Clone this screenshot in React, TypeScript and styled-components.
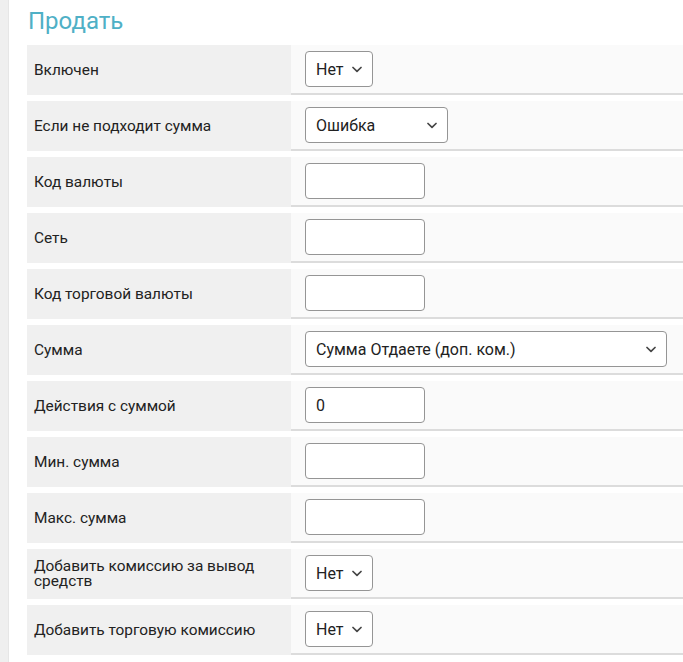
import React from "react";
import styled, { createGlobalStyle } from "styled-components";

const Global = createGlobalStyle`
  html, body { margin: 0; padding: 0; background: #ffffff; }
  body { font-family: Roboto, "Noto Sans", "Liberation Sans", sans-serif; color: #222; }
`;

const Page = styled.div`
  display: flex;
  min-height: 662px;
`;

const SideStrip = styled.div`
  width: 8px;
  flex: 0 0 8px;
  background: #efefef;
  border-right: 1px solid #e6e6e6;
`;

const Main = styled.main`
  flex: 1;
  padding: 6px 0 0 18px;
  min-width: 0;
`;

const Title = styled.h2`
  margin: 0 0 9px 1px;
  font-size: 24px;
  font-weight: 400;
  line-height: 30px;
  color: #4fb0c6;
`;

const Rows = styled.div`
  display: flex;
  flex-direction: column;
  gap: 6px;
`;

const Row = styled.div`
  display: grid;
  grid-template-columns: 264px 1fr;
  height: 50px;
`;

const Label = styled.div`
  background: #f0f0f0;
  display: flex;
  align-items: center;
  padding: 0 30px 0 7px;
  font-size: 15.4px;
  line-height: 15px;
  color: #222;
`;

const Value = styled.div`
  background: #fafafa;
  border-bottom: 2px solid #dcdcdc;
  display: flex;
  align-items: center;
  padding: 0 14px;
`;

const TextInput = styled.div`
  box-sizing: border-box;
  width: 120px;
  height: 36px;
  border: 1px solid #959595;
  border-radius: 4px;
  background: #fff;
  display: flex;
  align-items: center;
  padding: 0 10px;
  font-size: 16px;
  color: #222;
`;

const Select = styled.div<{ $w: number }>`
  box-sizing: border-box;
  width: ${(p) => p.$w}px;
  height: 36px;
  border: 1px solid #959595;
  border-radius: 4px;
  background: #fff;
  display: flex;
  align-items: center;
  justify-content: space-between;
  padding: 0 10px 0 10px;
  font-size: 16px;
  color: #222;
`;

const Chevron = () => (
  <svg width="10" height="7" viewBox="0 0 10 7" aria-hidden="true">
    <path d="M1 1.5 L5 5.3 L9 1.5" fill="none" stroke="#444" strokeWidth="1.7" strokeLinecap="round" strokeLinejoin="round" />
  </svg>
);

type Field =
  | { label: string; kind: "input"; value?: string }
  | { label: string; kind: "select"; value: string; width: number };

const fields: Field[] = [
  { label: "Включен", kind: "select", value: "Нет", width: 68 },
  { label: "Если не подходит сумма", kind: "select", value: "Ошибка", width: 143 },
  { label: "Код валюты", kind: "input" },
  { label: "Сеть", kind: "input" },
  { label: "Код торговой валюты", kind: "input" },
  { label: "Сумма", kind: "select", value: "Сумма Отдаете (доп. ком.)", width: 362 },
  { label: "Действия с суммой", kind: "input", value: "0" },
  { label: "Мин. сумма", kind: "input" },
  { label: "Макс. сумма", kind: "input" },
  { label: "Добавить комиссию за вывод средств", kind: "select", value: "Нет", width: 68 },
  { label: "Добавить торговую комиссию", kind: "select", value: "Нет", width: 68 },
];

export default function App() {
  return (
    <>
      <Global />
      <Page>
        <SideStrip />
        <Main>
          <Title>Продать</Title>
          <Rows>
            {fields.map((f) => (
              <Row key={f.label}>
                <Label>{f.label}</Label>
                <Value>
                  {f.kind === "input" ? (
                    <TextInput>{f.value ?? ""}</TextInput>
                  ) : (
                    <Select $w={f.width}>
                      <span>{f.value}</span>
                      <Chevron />
                    </Select>
                  )}
                </Value>
              </Row>
            ))}
          </Rows>
        </Main>
      </Page>
    </>
  );
}
